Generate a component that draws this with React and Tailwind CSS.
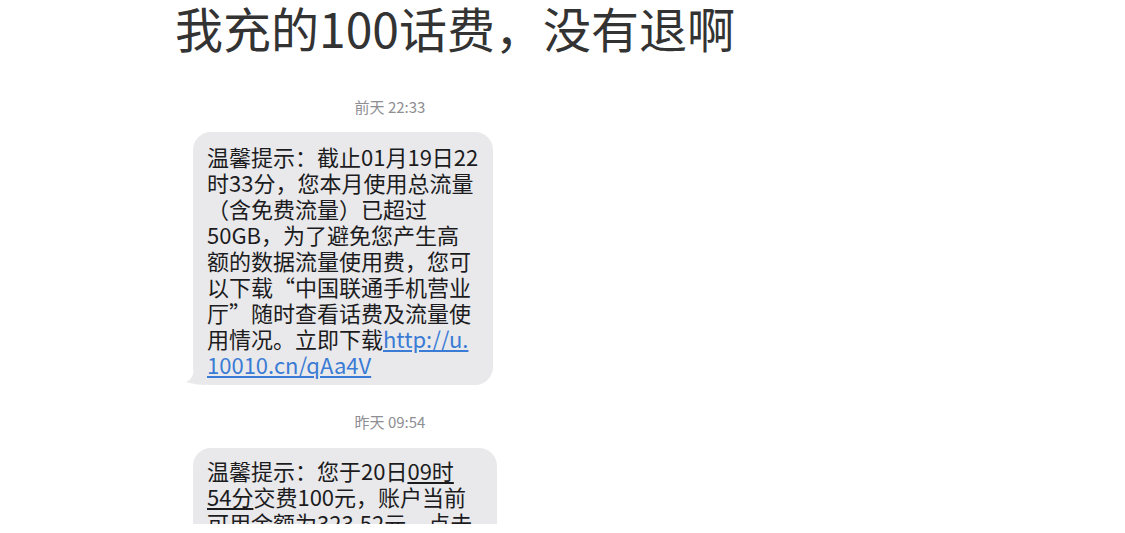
import React from 'react';

const font = { fontFamily: '"Noto Sans CJK SC", "Noto Sans", sans-serif' };

function Tail() {
    return (
        <svg className="absolute left-[-7px] bottom-0" width="22" height="18" viewBox="0 0 22 18">
            <path d="M20 0 L20 18 C14 18 6 17 0 15 C5 13 8 8 8 0 Z" fill="#e9e9eb" />
        </svg>
    );
}

function Stamp({ children }) {
    return (
        <div className="text-center text-[15px] leading-[18px] text-[#8e8e93]">{children}</div>
    );
}

export default function App() {
    const first = [
        '温馨提示：截止01月19日22',
        '时33分，您本月使用总流量',
        '（含免费流量）已超过',
        '50GB，为了避免您产生高',
        '额的数据流量使用费，您可',
        '以下载“中国联通手机营业',
        '厅”随时查看话费及流量使',
    ];

    return (
        <div className="w-[1125px] h-[533px] bg-white" style={font}>
            <div className="h-[524px] overflow-hidden">
                <div className="pl-[175px] pt-[1px] text-[48px] leading-[52px] text-[#333333]">
                    我充的100话费，没有退啊
                </div>
                <div className="ml-[193px] w-[394px] mt-[45px]">
                    <Stamp>前天 22:33</Stamp>
                    <div className="relative mt-[16px] w-[300px] rounded-[18px] bg-[#e9e9eb] pl-[14px] pt-[11px] pb-[8px] text-[22px] leading-[26px] text-[#1c1c1e]">
                        <Tail />
                        <div className="relative">
                            {first.map((line) => (
                                <div key={line} className="whitespace-nowrap">{line}</div>
                            ))}
                            <div className="whitespace-nowrap">
                                用情况。立即下载<span className="text-[#3a7bd5] underline underline-offset-2">http://u.</span>
                            </div>
                            <div className="whitespace-nowrap text-[#3a7bd5] underline underline-offset-2">10010.cn/qAa4V</div>
                        </div>
                    </div>
                    <div className="mt-[28px]">
                        <Stamp>昨天 09:54</Stamp>
                    </div>
                    <div className="relative mt-[17px] h-[80px] w-[304px] rounded-t-[18px] bg-[#e9e9eb] pl-[14px] pt-[9px] text-[22px] leading-[26px] text-[#1c1c1e]">
                        <div className="whitespace-nowrap">
                            温馨提示：您于20日<span className="underline underline-offset-2">09时</span>
                        </div>
                        <div className="whitespace-nowrap">
                            <span className="underline underline-offset-2">54分</span>交费100元，账户当前
                        </div>
                        <div className="whitespace-nowrap">可用余额为323.52元，点击</div>
                    </div>
                </div>
            </div>
        </div>
    );
}
